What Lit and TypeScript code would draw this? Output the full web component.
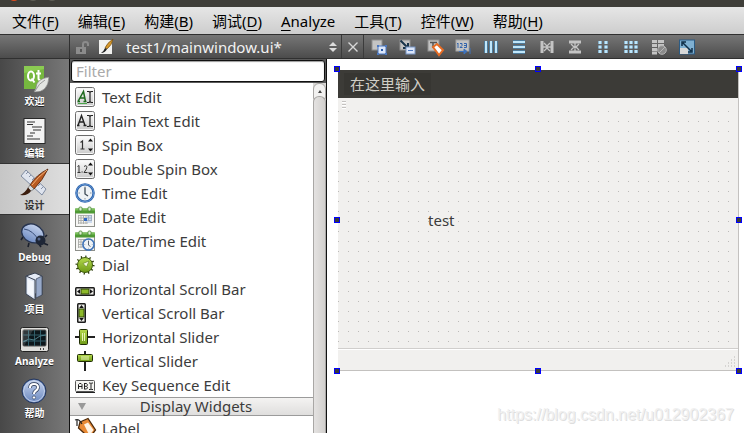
import { LitElement, html, svg, css, TemplateResult, SVGTemplateResult } from "lit";
import { customElement, property, state } from "lit/decorators.js";
import { classMap } from "lit/directives/class-map.js";

type Drawing = SVGTemplateResult;

const buttonFrame = svg`
  <rect x="0.5" y="0.5" width="19" height="19" rx="2" fill="url(#face)" stroke="#6b6b6b"/>
  <rect x="1.5" y="1.5" width="17" height="17" rx="1" fill="none" stroke="#f6f6f6"/>`;
const iBeam = svg`<path d="M12 4.5h2l1 1 1-1h2M12 15.5h2l1-1 1 1h2M15 5v10" fill="none" stroke="#222" stroke-width="1.2"/>`;
const spinArrows = svg`<path d="M13 6.500l2.500-3 2.500 3zM13 13.500l2.500 3 2.500-3z" fill="#111"/>`;
const calendar = svg`
  <rect x="0.500" y="4" width="19" height="15.500" fill="#f7f7f5" stroke="#8d8f8a"/>
  <rect x="0" y="1.500" width="20" height="5" rx="1" fill="#4f9a35"/>
  <rect x="0" y="1.500" width="20" height="2" fill="#7cbf5d"/>
  <rect x="4" y="0" width="3" height="4" rx="1" fill="#dcefd3" stroke="#3b7b27" stroke-width=".7"/>
  <rect x="13" y="0" width="3" height="4" rx="1" fill="#dcefd3" stroke="#3b7b27" stroke-width=".7"/>
  <path d="M3 8.500h14M3 11h14M3 13.500h14M3 16h10M3.500 8v9M6 8v9M8.500 8v9M11 8v9M13.500 8v6M16.500 8v6" stroke="#a9aaa8" stroke-width=".9" fill="none"/>`;
const clockFace = svg`
  <circle cx="10" cy="10" r="8.600" fill="#eef2f5" stroke="#2c62ab" stroke-width="2.400"/>
  <circle cx="10" cy="10" r="8.800" fill="none" stroke="#6d9ed8" stroke-width=".8"/>
  <path d="M10 3.500v1.500M10 15v1.500M3.500 10h1.500M15 10h1.500" stroke="#8b98a5"/>
  <path d="M10 4.500V11l3 2" fill="none" stroke="#3d4a56" stroke-width="1.300"/>`;

const widgetIcons: Record<string, Drawing> = {
  textEdit: svg`${buttonFrame}<path d="M3 14.500L8.500 4.500 10.500 14.500M5 11h5M2.500 14.500h2.500M8.500 14.500h3" fill="none" stroke="#1e6a1e" stroke-width="1.500"/><path d="M3 16.500h9" stroke="#4aa54a"/>${iBeam}`,
  plainEdit: svg`${buttonFrame}<path d="M3 14.500L6.500 4.500 10 14.500M4.500 11h4M2 14.500h2.500M8.500 14.500h3" fill="none" stroke="#222" stroke-width="1.400"/>${iBeam}`,
  spin: svg`${buttonFrame}<path d="M5.500 7.500l2-1.500v8M5.500 14h4" fill="none" stroke="#333" stroke-width="1.200"/>${spinArrows}`,
  doubleSpin: svg`${buttonFrame}<path d="M2.500 7.500l1.500-1v7M2.500 13.500h3M6.500 13h1.200M9 7.500q3-2 2.800 1 0 1.500-2.800 5h3.500" fill="none" stroke="#333"/>${spinArrows}`,
  time: clockFace,
  date: svg`${calendar}<rect x="9" y="11" width="3" height="3" fill="#2f68c4"/><rect x="12" y="8" width="5" height="8" fill="#8fb2e6" opacity=".4"/>`,
  dateTime: svg`${calendar}<g transform="translate(7 7) scale(.65)">${clockFace}</g>`,
  dial: svg`<circle cx="10" cy="10" r="8.500" fill="none" stroke="#2b3a0a" stroke-width="2" stroke-dasharray="1.300 3.150"/>
    <circle cx="10" cy="10" r="7.500" fill="url(#lime)" stroke="#3f5c0b"/>
    <path d="M14 6l-2.500 6-3.500-3.500z" fill="#f2f9dc" stroke="#5b7c1a" stroke-width=".6"/>`,
  hScroll: svg`<rect x="0" y="8" width="20" height="9" rx="1.500" fill="#1d1d1d"/><rect x="1.500" y="9.500" width="17" height="6" fill="#ecece8"/>
    <rect x="6" y="10" width="8" height="5" fill="#8db92a" stroke="#314708"/><path d="M5 10.200v4.600L2 12.500zM15 10.200v4.600l3-2.300z" fill="#111"/>`,
  vScroll: svg`<rect x="2" y="0" width="9" height="20" rx="1.500" fill="#1d1d1d"/><rect x="3.500" y="1.500" width="6" height="17" fill="#ecece8"/>
    <rect x="4" y="6" width="5" height="8" fill="#8db92a" stroke="#314708"/><path d="M4.200 5h4.600L6.500 2zM4.200 15h4.600l-2.300 3z" fill="#111"/>`,
  hSlider: svg`<path d="M0 10h20" stroke="#222" stroke-width="2"/><rect x="4.500" y="2.500" width="8" height="15" rx="1" fill="url(#lime)" stroke="#1f2c04"/>
    <path d="M7.500 6v8M9.500 6v8" stroke="#e6f4b8"/>`,
  vSlider: svg`<path d="M10 0v20" stroke="#222" stroke-width="2"/><rect x="2.500" y="3.500" width="15" height="7" rx="1" fill="url(#lime)" stroke="#1f2c04"/>
    <path d="M6 6h8M6 8h8" stroke="#e6f4b8"/>`,
  keySeq: svg`<rect x=".5" y="5.500" width="19" height="11" rx="1" fill="#f4f4f1" stroke="#555"/><path d="M1 17.500h19" stroke="#222"/>
    <path d="M3.500 14V9.500l1-1h1.500l1 1V14M3.500 11.500h3.500M9.500 8.500V14M9 8.500h2.500l.8.900v1l-.8.900H9.500M11.500 11.300l.9.900v.9l-.9.900H9M14 8h1.500l.5.600.5-.6H18M16 8.500v6M14 14.500h1.500l.5-.5.500.5H18" fill="none" stroke="#222"/>`,
  label: svg`<path d="M5 4l8-3.500L20.500 12l-6 8L3.500 10z" fill="#e98a35" stroke="#4b2a0c" stroke-width="1.300"/>
    <path d="M9 6.500l4-2 5.500 7.500-4 5.500z" fill="#fff3e3"/><path d="M0 2q4-2 7 4M2 1v7" fill="none" stroke="#222" stroke-width="1.200"/>`,
};

const modeIcons: Record<string, Drawing> = {
  welcome: svg`<path d="M4 2h20v16l-6 7H4z" fill="#76b83f"/><path d="M4 2h20v3L4 9z" fill="#8bcb52"/>
    <ellipse cx="11" cy="12" rx="3" ry="4.500" fill="none" stroke="#fff" stroke-width="2"/><path d="M11.500 14.500l3 4M18.500 6V14.500q0 1.800 2 1.500M16 9.500h5" fill="none" stroke="#fff" stroke-width="2"/>
    <path d="M29 13q-13 2-13 11-1 2-2 4 14 1 15-15z" fill="#e3e5e2" stroke="#777" stroke-width=".6"/><path d="M15 27q4-8 10-11" fill="none" stroke="#9b9b9b"/>`,
  edit: svg`<rect x="4" y="2.500" width="21" height="25" fill="#f3f3f3" stroke="#282828"/>
    <path d="M7 6h8M7 8.500h6M12 11h10M13 14h8M10 17h5M7 20h6M7 23h13" fill="none" stroke="#333" stroke-width="1.200"/>`,
  design: svg`<path d="M6 2l20 19-4 6L1 8z" fill="#dfe4ee" stroke="#76839b" stroke-width=".9"/><path d="M6 6l2-2M9 9l2-2M12 12l2-2M15 15l2-2M18 18l2-2M21 21l2-2" stroke="#8691a7"/>
    <path d="M28 1Q16 7 10 17l4 4Q23 12 28 1z" fill="#b85a22" stroke="#4f2109" stroke-width=".8"/><path d="M27 2Q18 9 12 17" stroke="#f1b075" fill="none"/>
    <path d="M10 17l4 4-3 2-3-3z" fill="#d8d8d8" stroke="#555" stroke-width=".6"/><path d="M8 19.500l3 3.500Q8 28 0 27q5-2 8-7.500z" fill="#3b1d0e"/>`,
  debug: svg`<path d="M3 17l-2 3M9 23l-1 4M19 24l2 3M25 17l2-2M23 23l5 2" stroke="#1a1f2c" stroke-width="1.600" fill="none"/>
    <ellipse cx="13" cy="13.500" rx="11.500" ry="9" transform="rotate(25 13 13)" fill="url(#blue)" stroke="#26334f" stroke-width="1.300"/>
    <path d="M4 9q9 1 15 12" fill="none" stroke="#394d77"/><circle cx="20.500" cy="20.500" r="5" fill="#1e2636"/><circle cx="19" cy="19" r="1.500" fill="#55678c"/>`,
  projects: svg`<path d="M6 4l9-3 7 3v19l-7-1z" fill="#e5ebf6" stroke="#394253"/><path d="M22 4v19l-6 3V7z" fill="#97a9c9" stroke="#394253" stroke-width=".7"/>
    <path d="M6 4l9 4v20l-9-6z" fill="#dfe7f5" stroke="#394253"/><path d="M7.500 7v14l6 4V9.500z" fill="#f4f7fc"/>`,
  analyze: svg`<rect x=".5" y="3.500" width="28" height="24" rx="2" fill="#dededb" stroke="#222"/><rect x="3" y="6" width="23" height="16" rx="1" fill="#0c161b" stroke="#555"/>
    <path d="M8.500 6v16M14.500 6v16M20.500 6v16M3 11h23M3 17h23" stroke="#315d68" fill="none"/><path d="M3 18l6-3 5 1 6-4 6-1" stroke="#4f7f8a" fill="none"/>
    <path d="M4 22L13 6H3z" fill="#fff" opacity=".15"/><path d="M20 25h1M23 25h1" stroke="#444" stroke-width="2"/>`,
  help: svg`<circle cx="14" cy="15" r="12" fill="#5e7db4" stroke="#27385c"/><circle cx="14" cy="15" r="10.500" fill="url(#blue)" stroke="#d8e1f2" stroke-width=".8"/>
    <path d="M10 12q0-4 4-4t4 3.500q0 2-2.500 3.500-1.500 1-1.500 3" fill="none" stroke="#24324f" stroke-width="3.400"/><path d="M10 12q0-4 4-4t4 3.500q0 2-2.500 3.500-1.500 1-1.500 3" fill="none" stroke="#fff" stroke-width="2.200"/>
    <circle cx="14" cy="21.500" r="1.600" fill="#fff" stroke="#24324f" stroke-width=".6"/>`,
};

const grey = "#c4c4c4";
const toolIcons: [string, Drawing][] = [
  ["Edit Widgets", svg`<rect x="1" y="1" width="10" height="10" fill="#c4c4c4" stroke="#909090"/><rect x="7" y="7" width="8" height="8" fill="#dbe6fa" stroke="#4b78c2"/><rect x="10" y="10" width="2" height="2" fill="#2557a8"/><path d="M6 6h2v2H6zM14 6h2v2h-2zM6 14h2v2H6zM14 14h2v2h-2z" fill="#4b78c2"/>`],
  ["Edit Signals/Slots", svg`<rect x="1" y="1" width="10" height="10" fill="#c4c4c4" stroke="#909090"/><path d="M1.500 1.500l7 7M9 4v5H4" fill="none" stroke="#19344b" stroke-width="2"/><rect x="7" y="8" width="9" height="7" fill="#dbe6fa" stroke="#7895c4"/><path d="M9 11.500h5" stroke="#4b78c2"/>`],
  ["Edit Buddies", svg`<rect x="1" y="1" width="11" height="11" fill="#c4c4c4" stroke="#909090"/><path d="M3 3.500h7M6 3v6" stroke="#555" stroke-width="1.500"/><path d="M6 8l4-3 6 6-4 5z" fill="#fff" stroke="#e66b23" stroke-width="2"/>`],
  ["Edit Tab Order", svg`<rect x="1" y="1" width="13" height="11" fill="#c4c4c4" stroke="#a4a4a4"/><path d="M2 5l1-1v5M5 4.500h2v2L5 8.500h2.500M9 4.500h2.500v4H9M9 6.500h2" fill="none" stroke="#3264ac"/><path d="M4 12.500h8M9 10l3 2.500L9 15zM15 9v6" fill="#3e72bb" stroke="#3e72bb"/>`],
  ["Lay Out Horizontally", svg`<path d="M3 2v12M8 2v12M13 2v12" stroke="#4e7b9b" stroke-width="4"/><path d="M3 2v12M8 2v12M13 2v12" stroke="#bfe6fa" stroke-width="2"/>`],
  ["Lay Out Vertically", svg`<path d="M2 3h12M2 8h12M2 13h12" stroke="#4e7b9b" stroke-width="4"/><path d="M2 3h12M2 8h12M2 13h12" stroke="#bfe6fa" stroke-width="2"/>`],
  ["Lay Out Horizontally in Splitter", svg`<path d="M3 2v12M13 2v12" stroke="${grey}" stroke-width="3"/><path d="M4 8h8M5 4l4 4-4 4M11 4L7 8l4 4" fill="none" stroke="${grey}" stroke-width="1.300"/>`],
  ["Lay Out Vertically in Splitter", svg`<path d="M2 3h12M2 13h12" stroke="${grey}" stroke-width="3"/><path d="M8 4v8M4 5l4 4 4-4M4 11l4-4 4 4" fill="none" stroke="${grey}" stroke-width="1.300"/>`],
  ["Lay Out in a Form", svg`<path d="M5 2v12M11 2v12" stroke="#4e7b9b" stroke-width="4" stroke-dasharray="3 1.500"/><path d="M5 2v12M11 2v12" stroke="#bfe6fa" stroke-width="3" stroke-dasharray="3 1.500"/>`],
  ["Lay Out in a Grid", svg`<path d="M3 2v12M8 2v12M13 2v12" stroke="#4e7b9b" stroke-width="4" stroke-dasharray="3 1.500"/><path d="M3 2v12M8 2v12M13 2v12" stroke="#bfe6fa" stroke-width="3" stroke-dasharray="3 1.500"/>`],
  ["Break Layout", svg`<path d="M1 2.500h5M7 2.500h6M1 6.500h5M7 6.500h6M1 10.500h5M1 14h5" stroke="${grey}" stroke-width="3"/><circle cx="11" cy="11" r="4.300" fill="#8a8a8a" stroke="#b5b5b5"/><path d="M8 14l6-6" stroke="#b5b5b5"/>`],
  ["Adjust Size", svg`<rect x=".5" y="1" width="15" height="14" fill="#7fb0d2" stroke="#2c5b83"/><rect x="1" y="9" width="8" height="6" fill="#d7d7d7"/><path d="M4 4l8 8M3 7V3h4M13 9v4H9" fill="none" stroke="#0f2e48" stroke-width="1.500"/>`],
];

@customElement("pixel-icon")
class PixelIcon extends LitElement {
  @property({ attribute: false }) drawing: Drawing = svg``;
  @property({ type: Number }) size = 16;

  static styles = css`
    :host { display: block; flex: none; }
    svg { display: block; overflow: visible; }
  `;

  render() {
    return html`<svg width=${this.size} height=${this.size} viewBox="0 0 ${this.size} ${this.size}" aria-hidden="true">
      <defs>
        <linearGradient id="face" x2="0" y2="1"><stop stop-color="#fff"/><stop offset="1" stop-color="#c9c9c9"/></linearGradient>
        <linearGradient id="lime" x2="0" y2="1"><stop stop-color="#b5da4e"/><stop offset="1" stop-color="#6e9a16"/></linearGradient>
        <linearGradient id="blue" x2="0" y2="1"><stop stop-color="#c3d1ec"/><stop offset="1" stop-color="#6f8cc2"/></linearGradient>
      </defs>
      ${this.drawing}
    </svg>`;
  }
}

const menus: [string, string, string][] = [
  ["文件(", "F", ")"], ["编辑(", "E", ")"], ["构建(", "B", ")"], ["调试(", "D", ")"],
  ["", "A", "nalyze"], ["工具(", "T", ")"], ["控件(", "W", ")"], ["帮助(", "H", ")"],
];

const modes: [string, string][] = [
  ["welcome", "欢迎"], ["edit", "编辑"], ["design", "设计"], ["debug", "Debug"],
  ["projects", "项目"], ["analyze", "Analyze"], ["help", "帮助"],
];

const inputWidgets: [string, string][] = [
  ["textEdit", "Text Edit"], ["plainEdit", "Plain Text Edit"], ["spin", "Spin Box"],
  ["doubleSpin", "Double Spin Box"], ["time", "Time Edit"], ["date", "Date Edit"],
  ["dateTime", "Date/Time Edit"], ["dial", "Dial"], ["hScroll", "Horizontal Scroll Bar"],
  ["vScroll", "Vertical Scroll Bar"], ["hSlider", "Horizontal Slider"],
  ["vSlider", "Vertical Slider"], ["keySeq", "Key Sequence Edit"],
];

@customElement("widget-box")
class WidgetBox extends LitElement {
  static styles = css`
    :host { display: flex; flex-direction: column; min-height: 0; background: #fff; color: #3c3c3c; }
    .search { flex: none; background: #5a5a5a; padding: 1px 0; display: flex; }
    .filter {
      flex: 1; min-width: 0; box-sizing: border-box; height: 22px; margin: 0 1px; padding: 0 4px;
      border: 1px solid #111; border-radius: 3px; background: #fff; outline: 0;
      box-shadow: inset 0 1px 1px #999; font: inherit; color: #3c3c3c;
    }
    .filter::placeholder { color: #aaa; opacity: 1; }
    .body { flex: 1; display: flex; min-height: 0; overflow: hidden; }
    .list { flex: 1; min-width: 0; padding-top: 2px; }
    .group { list-style: none; margin: 0; padding: 0; }
    .item {
      display: flex; align-items: center; gap: 7px; width: 100%; height: 24px; padding: 0 5px;
      border: 0; background: none; font: inherit; color: inherit; text-align: left; white-space: nowrap;
    }
    .heading {
      display: grid; grid-template-columns: 22px 1fr 13px; align-items: center; width: 100%; height: 19px; padding: 0;
      border: solid #9b9b9b; border-width: 1px 0; background: linear-gradient(#f4f3f2, #dfdedd);
      font: inherit; line-height: 17px; color: inherit;
    }
    .fold { justify-self: end; border: 4px solid transparent; border-top: 7px solid #999; border-bottom: 0; margin-right: 6px; }
    .scroll { flex: none; width: 13px; box-sizing: border-box; background: #d8d6d4; display: flex; flex-direction: column; }
    .up { height: 16px; flex: none; border: 1px solid #a9a7a5; border-radius: 6px 6px 0 0; padding: 0; background: #f2f1f0; display: grid; place-items: center; }
    .chevron { border: 2px solid transparent; border-bottom: 3px solid #444; border-top: 0; }
    .thumb { flex: 1; border: 1px solid #a9a7a5; border-bottom: 0; border-radius: 6px 6px 0 0; margin-top: -3px; background: linear-gradient(90deg, #e4e2e1, #d2d0ce); }
  `;

  private item([icon, name]: [string, string]): TemplateResult {
    return html`<li><button class="item"><pixel-icon .size=${20} .drawing=${widgetIcons[icon]}></pixel-icon>${name}</button></li>`;
  }

  render() {
    return html`
      <div class="search"><input class="filter" type="text" placeholder="Filter" aria-label="Filter"></div>
      <div class="body">
        <div class="list">
          <ul class="group">${inputWidgets.map((w) => this.item(w))}</ul>
          <button class="heading" aria-expanded="true"><span class="fold"></span><span>Display Widgets</span></button>
          <ul class="group">${this.item(["label", "Label"])}</ul>
        </div>
        <div class="scroll"><button class="up" aria-label="Scroll up"><span class="chevron"></span></button><div class="thumb"></div></div>
      </div>`;
  }
}

@customElement("form-canvas")
class FormCanvas extends LitElement {
  static styles = css`
    :host { display: flex; flex-direction: column; background: #fff; padding: 11px 5px 0 11px; min-width: 0; color: #3c3c3c; }
    .form { position: relative; border: solid #c3c1bf; border-width: 0 1px 1px 0; background: #f1f0ee; }
    .menubar { height: 28px; background: #3c3b37; display: flex; padding: 3px 6px; box-sizing: border-box; }
    .placeholder { background: #373632; border: 0; padding: 0 6px; font: inherit; line-height: 22px; color: #d0cec6; }
    .central {
      position: relative; height: 250px;
      background: linear-gradient(#f1f0ee, #f1f0ee) 0 0 / 100% 12px no-repeat,
        linear-gradient(90deg, #f1f0ee 9px, transparent 9px) 1px 0 / 10px 10px,
        linear-gradient(#f1f0ee 9px, #bcbab8 9px) 0 4px / 10px 10px;
    }
    .grip { position: absolute; left: 4px; top: 3px; width: 4px; height: 8px; background: repeating-linear-gradient(#c4c2c0 0 1px, #fff 1px 2px, transparent 2px 3px); }
    .label { position: absolute; left: 90px; top: 112px; line-height: 20px; }
    .status { height: 22px; box-sizing: border-box; border-top: 1px solid #d0cecc; box-shadow: inset 0 1px #fff; display: flex; justify-content: flex-end; align-items: flex-end; padding: 2px; }
    .handle { position: absolute; width: 6px; height: 6px; box-sizing: border-box; border: 1px solid #00f; background: #3a3a3a; transform: translate(-50%, -50%); }
    .n { top: -1px; } .m { top: 50%; } .s { top: calc(100% + 1px); }
    .w { left: -1px; } .c { left: 50%; } .e { left: calc(100% + 1px); }
    .watermark { margin: 32px 5px 0 0; text-align: right; font: 16px/24px "Liberation Sans", Arial, sans-serif; color: #f0f0f0; text-shadow: 1px 1px #dedede; }
  `;

  render() {
    const handles = ["n w", "n c", "n e", "m w", "m e", "s w", "s c", "s e"];
    return html`
      <div class="form">
        <div class="menubar"><button class="placeholder">在这里输入</button></div>
        <div class="central"><span class="grip"></span><span class="label">test</span></div>
        <div class="status"><pixel-icon .size=${12} .drawing=${svg`<path d="M10 1h1M7 4h1M10 4h1M4 7h1M7 7h1M10 7h1M1 10h1M4 10h1M7 10h1M10 10h1" stroke="#b9b7b5"/>`}></pixel-icon></div>
        ${handles.map((h) => html`<span class="handle ${h}"></span>`)}
      </div>
      <div class="watermark">https://blog.csdn.net/u012902367</div>`;
  }
}

@customElement("app-root")
class AppRoot extends LitElement {
  @state() private mode = "design";

  static styles = css`
    :host { display: flex; flex-direction: column; height: 100vh; overflow: hidden; font: 15px/20px "Noto Sans", "Noto Sans CJK SC", sans-serif; color: #3c3c3c; }
    .titlebar { flex: none; height: 7px; background: #3f3e39; overflow: hidden; }
    .menubar { flex: none; display: flex; gap: 19px; height: 27px; padding: 0 12px; background: linear-gradient(#e6e6e6, #cdcdcd); }
    .menu { border: 0; padding: 0; background: none; font: inherit; color: #000; white-space: nowrap; }
    .key { text-decoration: underline; text-underline-offset: 3px; text-decoration-thickness: 1px; }
    .toolbar { flex: none; display: flex; height: 25px; box-sizing: border-box; border: solid #303030; border-width: 1px 0; background: linear-gradient(#767676, #4c4c4c); }
    .spacer { width: 69px; border-right: 1px solid #303030; flex: none; }
    .doc { display: flex; align-items: center; width: 272px; box-sizing: border-box; padding: 0 2px 0 6px; border-right: 1px solid #3b3b3b; }
    .file { flex: 1; min-width: 0; appearance: none; border: 0; outline: 0; background: none; padding: 0 0 0 12px; font: inherit; color: #f2f2f2; }
    .pen { margin-left: 8px; }
    .close { width: 22px; border: 0; border-right: 1px solid #3b3b3b; padding: 0; background: none; display: grid; place-items: center; }
    .tools { display: flex; padding-left: 1px; }
    .tool { width: 28px; border: 0; padding: 0; background: none; display: grid; place-items: center; }
    .work { flex: 1; display: grid; grid-template-columns: 69px 256px 1fr; gap: 1px; background: #111; min-height: 0; }
    .modes { display: flex; flex-direction: column; background: linear-gradient(90deg, #484848, #787878); }
    .mode { display: flex; flex-direction: column; align-items: center; height: 52px; box-sizing: border-box; flex: none; border: solid transparent; border-width: 1px 0; padding: 4px 0 0; background: none; font: bold 10px/14px "Noto Sans", "Noto Sans CJK SC", sans-serif; color: #fff; text-shadow: 0 1px #222; }
    .mode.on { background: linear-gradient(90deg, #c6c6c6, #dedede); border-color: #333; color: #333; text-shadow: none; }
  `;

  render() {
    return html`
      <div class="titlebar"><pixel-icon .size=${62} .drawing=${svg`<circle cx="14" cy="-5" r="6" fill="#df4b1f"/><circle cx="33" cy="-5" r="6" fill="#5f5e57"/><circle cx="52" cy="-5" r="6" fill="#5f5e57"/>`}></pixel-icon></div>
      <nav class="menubar">${menus.map(([a, k, b]) => html`<button class="menu">${a}<span class="key">${k}</span>${b}</button>`)}</nav>
      <div class="toolbar">
        <div class="spacer"></div>
        <div class="doc">
          <pixel-icon .size=${14} .drawing=${svg`<rect x="0" y="7" width="10" height="7" fill="#8c8c8c"/><path d="M7 7V4q0-2 2.500-2T12 4v2" fill="none" stroke="#8c8c8c" stroke-width="2"/><rect x="4" y="9" width="2" height="3" fill="#555"/>`}></pixel-icon>
          <pixel-icon class="pen" .size=${16} .drawing=${svg`<rect x="1" y="1" width="13" height="14" fill="#f1f1ef"/><path d="M15 0q-6 4-8 9l2 1q5-4 6-10z" fill="#d99a2b" stroke="#6b4710" stroke-width=".7"/><path d="M7 9l2 1q-2 4-6 4 3-2 4-5z" fill="#222"/>`}></pixel-icon>
          <select class="file" aria-label="Open document"><option>test1/mainwindow.ui*</option></select>
          <pixel-icon .size=${12} .drawing=${svg`<path d="M2 5l4-4 4 4zM2 7l4 4 4-4z" fill="#dcdcdc"/>`}></pixel-icon>
        </div>
        <button class="close" aria-label="Close document"><pixel-icon .size=${10} .drawing=${svg`<path d="M.5.5l9 9M9.500.5l-9 9" stroke="#d8d8d8" stroke-width="1.400"/>`}></pixel-icon></button>
        <div class="tools">${toolIcons.map(([name, d]) => html`<button class="tool" aria-label=${name}><pixel-icon .size=${16} .drawing=${d}></pixel-icon></button>`)}</div>
      </div>
      <div class="work">
        <div class="modes">${modes.map(([id, name]) => html`
          <button class=${classMap({ mode: true, on: id === this.mode })} @click=${() => (this.mode = id)}><pixel-icon .size=${30} .drawing=${modeIcons[id]}></pixel-icon>${name}</button>`)}</div>
        <widget-box></widget-box>
        <form-canvas></form-canvas>
      </div>`;
  }
}
